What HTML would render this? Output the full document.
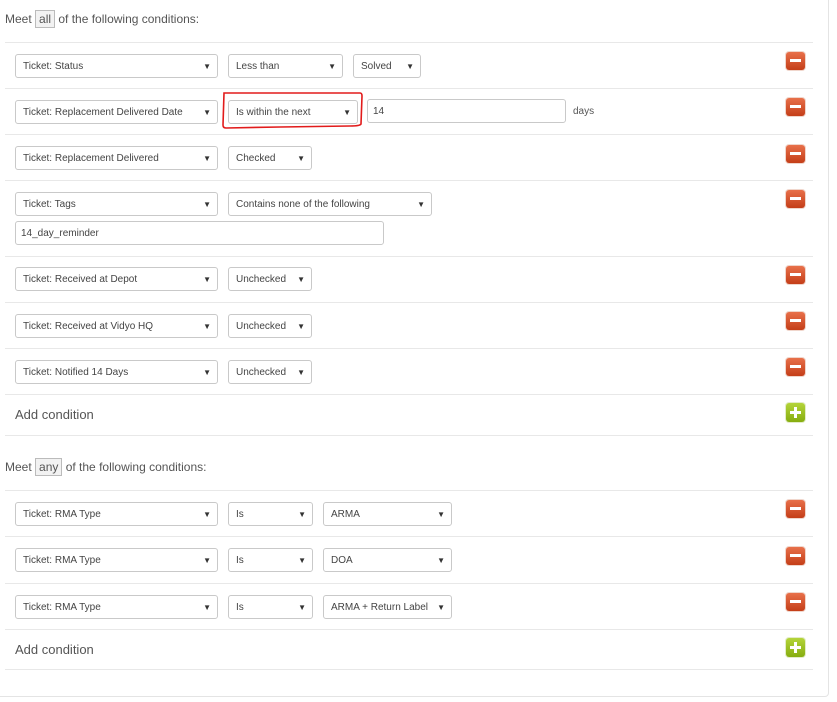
<!DOCTYPE html>
<html><head><style>
body{margin:0;width:837px;height:702px;background:#fff;font-family:"Liberation Sans",sans-serif;position:relative;overflow:hidden;color:#555}
.frame{position:absolute;left:-10px;top:-10px;width:837px;height:705px;border:1px solid #e4e4e4;border-radius:4px}
.hl{position:absolute;left:5px;width:808px;height:1px;background:#e8e8e8}
.sel{position:absolute;border:1px solid #c9c9c9;border-radius:3px;font-size:10px;line-height:24px;padding-left:7px;box-sizing:border-box;height:24px;color:#444;background:#fff}
.sel:after{content:"▼";position:absolute;right:6px;top:0;font-size:8px;color:#333}
.inp{position:absolute;height:24px;border:1px solid #c9c9c9;border-radius:3px;font-size:10px;line-height:24px;padding-left:5px;box-sizing:border-box;color:#444}
.minus{position:absolute;left:786px;width:19px;height:18px;border-radius:3px;background:linear-gradient(#e8704a,#c43e18);box-shadow:0 0 0 1px #f0d6cc}
.minus:after{content:"";position:absolute;left:4px;top:7px;width:11px;height:3px;background:#fff}
.plus{position:absolute;left:786px;width:19px;height:19px;border-radius:3px;background:linear-gradient(#b4d43a,#86ad10);box-shadow:0 0 0 1px #e3ecc8}
.plus:before{content:"";position:absolute;left:4px;top:8px;width:11px;height:3px;background:#fff}
.plus:after{content:"";position:absolute;left:8px;top:4px;width:3px;height:11px;background:#fff}
.meet{position:absolute;left:5px;font-size:12px;color:#555}
.meet span{border:1px solid #bbb;background:#f2f2f2;padding:1px 3px}
.add{position:absolute;left:15px;font-size:13px;color:#555}
.days{position:absolute;left:573px;top:106px;font-size:10px;color:#555}
</style></head><body>
<div class="frame"></div>
<div class="meet" style="top:12px">Meet <span>all</span> of the following conditions:</div>
<div class="hl" style="top:42px"></div>
<div class="hl" style="top:88px"></div>
<div class="hl" style="top:134px"></div>
<div class="hl" style="top:180px"></div>
<div class="hl" style="top:256px"></div>
<div class="hl" style="top:302px"></div>
<div class="hl" style="top:348px"></div>
<div class="hl" style="top:394px"></div>
<div class="hl" style="top:435px"></div>

<div class="sel" style="left:15px;top:54px;width:203px">Ticket: Status</div>
<div class="sel" style="left:228px;top:54px;width:115px">Less than</div>
<div class="sel" style="left:353px;top:54px;width:68px">Solved</div>
<div class="minus" style="top:52px"></div>

<div class="sel" style="left:15px;top:100px;width:203px">Ticket: Replacement Delivered Date</div>
<div class="sel" style="left:228px;top:100px;width:130px">Is within the next</div>
<svg style="position:absolute;left:220px;top:90px" width="145" height="40"><path d="M4 3 L140 3 Q142 3 142 6 L141 34 Q140 36 130 36 L60 37 L6 38 Q3 38 3 35 Z" fill="none" stroke="#e21b1b" stroke-width="1.6"/></svg>
<div class="inp" style="left:367px;top:99px;width:199px">14</div>
<div class="days">days</div>
<div class="minus" style="top:98px"></div>

<div class="sel" style="left:15px;top:146px;width:203px">Ticket: Replacement Delivered</div>
<div class="sel" style="left:228px;top:146px;width:84px">Checked</div>
<div class="minus" style="top:145px"></div>

<div class="sel" style="left:15px;top:192px;width:203px">Ticket: Tags</div>
<div class="sel" style="left:228px;top:192px;width:204px">Contains none of the following</div>
<div class="inp" style="left:15px;top:221px;width:369px">14_day_reminder</div>
<div class="minus" style="top:190px"></div>

<div class="sel" style="left:15px;top:267px;width:203px">Ticket: Received at Depot</div>
<div class="sel" style="left:228px;top:267px;width:84px">Unchecked</div>
<div class="minus" style="top:266px"></div>

<div class="sel" style="left:15px;top:314px;width:203px">Ticket: Received at Vidyo HQ</div>
<div class="sel" style="left:228px;top:314px;width:84px">Unchecked</div>
<div class="minus" style="top:312px"></div>

<div class="sel" style="left:15px;top:360px;width:203px">Ticket: Notified 14 Days</div>
<div class="sel" style="left:228px;top:360px;width:84px">Unchecked</div>
<div class="minus" style="top:358px"></div>

<div class="add" style="top:407px">Add condition</div>
<div class="plus" style="top:403px"></div>

<div class="meet" style="top:460px">Meet <span>any</span> of the following conditions:</div>
<div class="hl" style="top:490px"></div>
<div class="hl" style="top:536px"></div>
<div class="hl" style="top:583px"></div>
<div class="hl" style="top:629px"></div>
<div class="hl" style="top:669px"></div>

<div class="sel" style="left:15px;top:502px;width:203px">Ticket: RMA Type</div>
<div class="sel" style="left:228px;top:502px;width:85px">Is</div>
<div class="sel" style="left:323px;top:502px;width:129px">ARMA</div>
<div class="minus" style="top:500px"></div>

<div class="sel" style="left:15px;top:548px;width:203px">Ticket: RMA Type</div>
<div class="sel" style="left:228px;top:548px;width:85px">Is</div>
<div class="sel" style="left:323px;top:548px;width:129px">DOA</div>
<div class="minus" style="top:547px"></div>

<div class="sel" style="left:15px;top:595px;width:203px">Ticket: RMA Type</div>
<div class="sel" style="left:228px;top:595px;width:85px">Is</div>
<div class="sel" style="left:323px;top:595px;width:129px">ARMA + Return Label</div>
<div class="minus" style="top:593px"></div>

<div class="add" style="top:642px">Add condition</div>
<div class="plus" style="top:638px"></div>
</body></html>
